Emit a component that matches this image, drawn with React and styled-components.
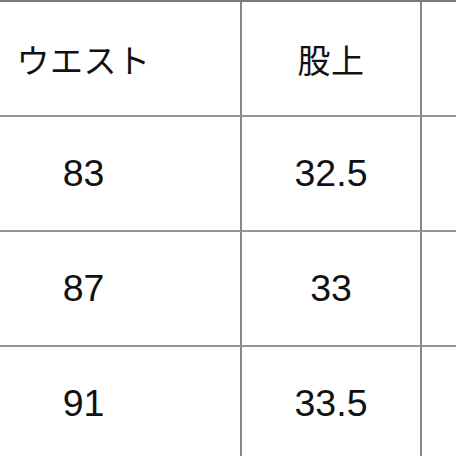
import React from "react";
import styled, { createGlobalStyle } from "styled-components";

const GlobalStyle = createGlobalStyle`
  html, body {
    margin: 0;
    padding: 0;
    background: #ffffff;
    overflow: hidden;
  }
  body {
    font-family: "Liberation Sans", "Noto Sans CJK JP", sans-serif;
  }
`;

const Viewport = styled.div`
  width: 456px;
  height: 456px;
  overflow: hidden;
`;

const Table = styled.div`
  display: grid;
  grid-template-columns: 315px 180px 200px;
  margin-left: -73px;
  border-top: 2px solid #7a7a7a;
  width: max-content;
`;

const Cell = styled.div`
  height: 113px;
  display: flex;
  align-items: center;
  justify-content: center;
  border-bottom: 2px solid #959595;
  border-right: 2px solid #878787;
  font-size: ${({ $head }) => ($head ? "33px" : "37.5px")};
  color: #111111;
  letter-spacing: ${({ $head }) => ($head ? "0.5px" : "0")};
`;

const rows = [
  ["ウエスト", "股上", ""],
  ["83", "32.5", ""],
  ["87", "33", ""],
  ["91", "33.5", ""],
];

const App = () => {
  return (
    <>
      <GlobalStyle />
      <Viewport>
        <Table>
          {rows.map((row, i) =>
            row.map((val, j) => (
              <Cell key={`${i}-${j}`} $head={i === 0}>
                {val}
              </Cell>
            ))
          )}
        </Table>
      </Viewport>
    </>
  );
};

export default App;
